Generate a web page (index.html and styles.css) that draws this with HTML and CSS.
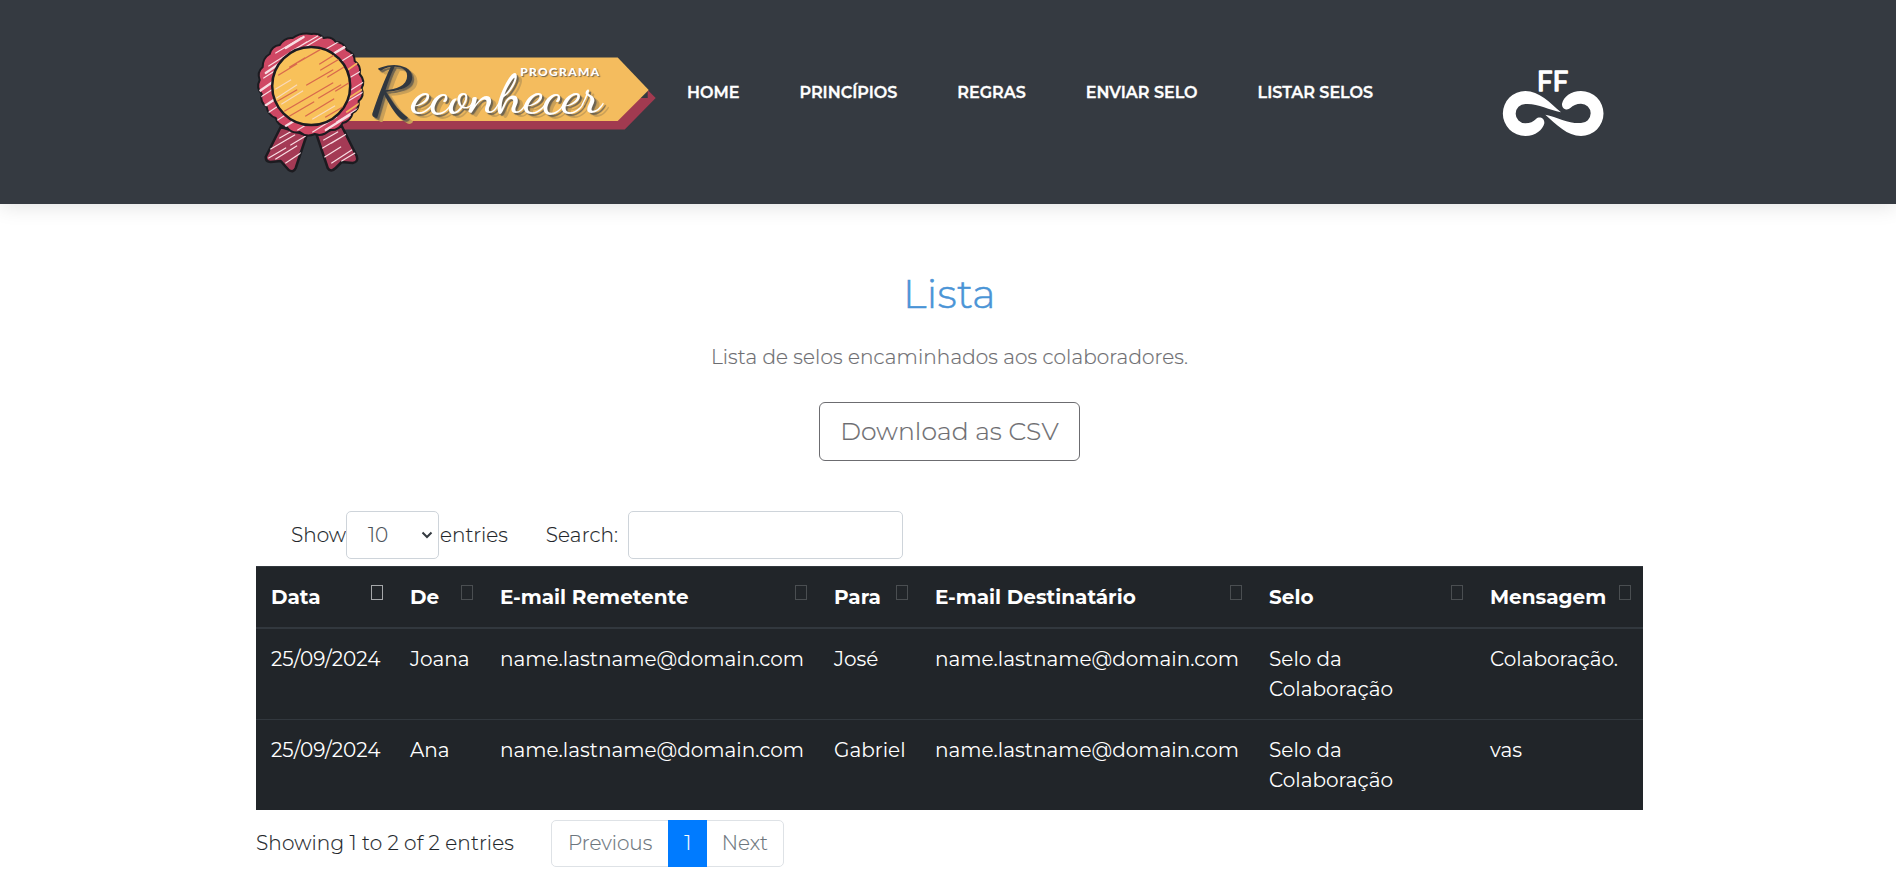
FILE: index.html
```html
<!DOCTYPE html>
<html lang="pt-BR">
<head>
<meta charset="utf-8">
<title>Programa Reconhecer</title>
<link rel="stylesheet" href="styles.css">
</head>
<body>
<header class="topbar">
  <a class="brand" href="#">
    <svg class="brand-logo" viewBox="249.300 25 410 155" role="img" aria-label="Programa Reconhecer">
      <defs>
        <path id="scallop" d="M311 34Q318 33 323 38Q331 36 335 42Q343 42 346 50Q354 53 354 61Q361 66 359 74Q365 81 361 88Q364 96 358 101Q359 109 352 113Q350 121 342 123Q338 131 329 130Q322 137 314 134Q306 138 299 132Q291 134 286 127Q277 126 275 118Q267 115 266 107Q259 102 261 94Q255 88 259 80Q256 72 262 67Q262 58 269 54Q271 46 279 45Q284 37 292 38Q300 32 311 34Z"/>
        <path id="legs" d="M280 127L265 157Q265 162 270 162L280 161L288 170Q293 173 295 168L306 135ZM316 135L327 168Q330 173 335 168L341 162L352 163Q358 162 356 156L341 126Z"/>
        <clipPath id="seal"><use href="#scallop"/></clipPath>
        <clipPath id="coin"><circle cx="310.500" cy="86" r="38"/></clipPath>
        <clipPath id="tails"><use href="#legs"/></clipPath>
      </defs>
      <path fill="#a13a50" d="M340 98H647V90L655 98L624 129.500H340Z"/>
      <path fill="#f4bc5e" d="M340 57.500H617L648 90L617 121H340Z"/>
      <use href="#legs" class="leg"/>
      <g clip-path="url(#tails)" class="streak pale"><path d="M270 149l24-14M268 158l17-10M275 159l21-13M285 163l15-10M290 145l15-9M279 138l14-8M322 148l22-13M324 157l16-10M331 163l20-13M341 161l15-9M323 140l14-8M331 143l18-11"/></g>
      <use href="#scallop" class="rosette"/>
      <g clip-path="url(#seal)" class="streak pale"><path d="M268 66l38-24M263 78l14-9M275 53l25-15M291 51l26-15M303 48l20-12M322 51l17-10M330 55l19-12M341 61l13-8M260 97l14-9M267 113l15-10M277 120l20-13M297 130l23-14M312 132l24-15M336 122l22-14M346 102l18-11M347 92l16-10M345 80l17-10"/><path class="wide" d="M265 73l16-11M259 91l13-9M264 106l12-8M285 126l18-11M325 130l24-15M285 48l18-11M334 53l14-8"/><path class="gold" d="M344 72l17-12M346 112l16-11M348 98l14-9"/></g>
      <circle cx="310.500" cy="86" r="39" fill="#f8c15a" stroke="#1c1b20" stroke-width="2.500"/>
      <g clip-path="url(#coin)"><path class="streak rust" d="M298 62l26-15M278 75l18-11M320 70l22-13M327 77l18-11M306 85l26-15M284 111l48-28M289 116l24-14M305 116l28-17M325 117l17-10M319 64l16-10M335 91l13-8M277 101l19-11M289 67l15-9M318 98l22-13"/><path class="streak cream" d="M276 98l20-13M275 89l15-9M281 104l21-13M312 119l22-13"/></g>
      <text class="script" x="370" y="112" textLength="231" lengthAdjust="spacingAndGlyphs"><tspan class="initial">R</tspan>econhecer</text>
      <text class="small-caps" x="519.500" y="75.500" textLength="79">PROGRAMA</text>
    </svg>
  </a>
  <nav class="menu">
    <a href="#">HOME</a>
    <a href="#">PRINCÍPIOS</a>
    <a href="#">REGRAS</a>
    <a href="#">ENVIAR SELO</a>
    <a href="#">LISTAR SELOS</a>
  </nav>
  <svg class="ff-logo" viewBox="0 0 390 270" role="img" aria-label="FF">
    <text class="ff" x="141" y="93" textLength="94">FF</text>
    <path id="half" fill="#fff" d="M213 157C180 128 147 93 106 93A67 67 0 0 0 106 228C137 228 158 210 163 190C164 174 148 168 138 177C130 185 120 190 106 190A29 29 0 0 1 106 132C140 129 176 149 213 157Z"/>
    <use href="#half" transform="rotate(180 189.500 160.500)"/>
  </svg>
</header>
<main class="page">
  <section class="intro">
    <h1>Lista</h1>
    <p>Lista de selos encaminhados aos colaboradores.</p>
    <button class="download" type="button">Download as CSV</button>
  </section>
  <div class="controls">
    <label class="length">Show<span class="select">10<svg class="chevron" viewBox="0 0 12 8"><path d="M1.500 1.500L6 6L10.500 1.500"/></svg></span>entries</label>
    <label class="search">Search:<input type="text"></label>
  </div>
  <table class="seals">
    <colgroup><col class="c1"><col class="c2"><col class="c3"><col class="c4"><col class="c5"><col class="c6"><col class="c7"></colgroup>
    <thead>
      <tr><th class="sorted">Data</th><th>De</th><th>E-mail Remetente</th><th>Para</th><th>E-mail Destinatário</th><th>Selo</th><th>Mensagem</th></tr>
    </thead>
    <tbody>
      <tr><td>25/09/2024</td><td>Joana</td><td>name.lastname@domain.com</td><td>José</td><td>name.lastname@domain.com</td><td>Selo da<br>Colaboração</td><td>Colaboração.</td></tr>
      <tr><td>25/09/2024</td><td>Ana</td><td>name.lastname@domain.com</td><td>Gabriel</td><td>name.lastname@domain.com</td><td>Selo da<br>Colaboração</td><td>vas</td></tr>
    </tbody>
  </table>
  <div class="summary">
    <span class="info">Showing 1 to 2 of 2 entries</span>
    <div class="pager"><a href="#">Previous</a><a href="#" class="current">1</a><a href="#">Next</a></div>
  </div>
</main>
</body>
</html>
```
FILE: styles.css
```css
* { box-sizing: border-box; }
body { margin: 0; background: #fff; color: #212529; font-family: Montserrat, Inter, "Open Sans", sans-serif; font-size: 20px; font-weight: 300; line-height: 30px; }
a { color: inherit; text-decoration: none; }
.topbar { display: flex; height: 204px; padding: 25px 276px 0 250px; background: #353a41; box-shadow: 0 2px 20px rgba(0,0,0,.12); }
.brand { width: 410px; height: 155px; }
.brand-logo { display: block; width: 410px; height: 155px; }
.leg { fill: #a43a55; stroke: #1c1b20; stroke-width: 2.5; stroke-linejoin: round; }
.rosette { fill: #cf4864; stroke: #1c1b20; stroke-width: 2; }
.streak { stroke-width: 1.2; stroke-linecap: round; }
.pale { stroke: #f8dde3; }
.wide { stroke-width: 2.2; }
.gold { stroke: #f4b45c; stroke-width: 1.6; }
.rust { stroke: #d96a4c; stroke-width: 1.4; }
.cream { stroke: #f9d9bb; }
.script { font-family: "Dancing Script", "Kaushan Script", "Satisfy", "Pacifico", Lato, sans-serif; font-size: 54px; font-weight: 500; fill: #fff; text-shadow: 2px 2px 1px #6d6350, 5px 4px 0 #caa058; }
.initial { font-size: 66px; fill: #303740; }
.small-caps { font-family: Lato, sans-serif; font-size: 12px; font-weight: 900; fill: #fff; text-shadow: 1px 1px 1px #6d6350; }
.menu { display: flex; gap: 60px; padding: 53px 0 0 27px; color: #fff; font-size: 16px; font-weight: 600; -webkit-text-stroke: .3px; }
.ff-logo { width: 130px; height: 90px; margin: 35px 0 0 auto; }
.ff { font-family: Lato, Inter, sans-serif; font-size: 82px; font-weight: 400; fill: #fff; stroke: #fff; stroke-width: 4; stroke-linejoin: round; }
.page { padding: 0 253px 0 256px; }
.intro { display: flex; flex-direction: column; align-items: center; padding-top: 65px; -webkit-text-stroke: .2px; }
.intro h1 { margin: 0; color: #4a94d6; font-size: 40px; font-weight: 300; line-height: 50px; letter-spacing: .3px; -webkit-text-stroke: .5px; }
.intro p { margin: 23px 0 0; color: #6c6c70; letter-spacing: .12px; }
.download { width: 261px; height: 59px; margin-top: 30px; padding: 0 0 2px; border: 1px solid #6c6c70; border-radius: 6px; background: #fff; color: #6c6c70; font: inherit; font-size: 25px; letter-spacing: .1px; }
.controls { display: flex; gap: 37px; height: 48px; margin: 50px 0 7px; padding-left: 35px; -webkit-text-stroke: .15px; }
.controls label { display: flex; align-items: center; }
.select { display: flex; align-items: center; justify-content: space-between; width: 93px; height: 48px; margin-right: 1px; padding: 0 5px 0 21px; border: 1px solid #ced4da; border-radius: 5px; color: #495057; }
.chevron { width: 12px; height: 8px; fill: none; stroke: #343a40; stroke-width: 2; }
.search { gap: 10px; margin-left: 1px; letter-spacing: .13px; }
.search input { width: 275px; height: 48px; border: 1px solid #ced4da; border-radius: 5px; }
.seals { width: 1387px; table-layout: fixed; border-collapse: collapse; background: #212529; color: #fff; }
.c1 { width: 139px; } .c2 { width: 90px; } .c3 { width: 334px; } .c4 { width: 101px; } .c5 { width: 334px; } .c6 { width: 221px; } .c7 { width: 168px; }
.seals th, .seals td { padding: 15px 0 15px 15px; border-top: 1px solid #32383e; text-align: left; vertical-align: top; white-space: nowrap; }
.seals td { font-weight: 400; }
.seals th { position: relative; border-bottom: 2px solid #32383e; font-weight: 700; }
.seals th::after { content: ""; position: absolute; top: 18px; right: 12px; width: 10px; height: 13px; border: 1px solid #4a4e51; }
.seals th.sorted::after { border-color: #a5a7a9; }
.summary { display: flex; align-items: center; margin-top: 10px; -webkit-text-stroke: .15px; }
.info { width: 295px; padding-bottom: 2px; letter-spacing: .13px; }
.pager { display: flex; height: 47px; border: 1px solid #dee2e6; border-radius: 5px; color: #6c757d; }
.pager a { display: flex; align-items: center; height: 44px; padding: 0 15px 0 14.500px; }
.pager a:first-child { padding: 0 16px; }
.pager .current { justify-content: center; width: 39px; height: 47px; margin-top: -1px; padding: 0 0 1px; background: #007bff; color: #fff; }
```
